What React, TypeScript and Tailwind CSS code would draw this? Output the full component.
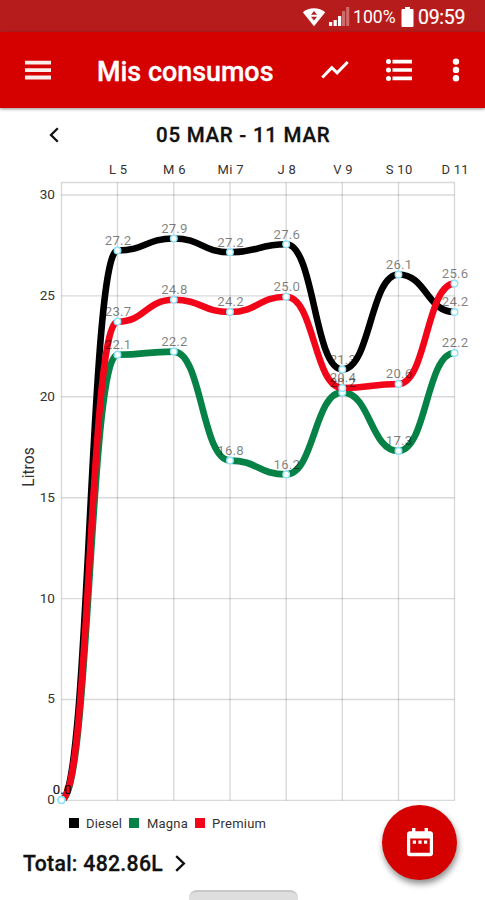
type Series = { name: string; color: string; points: number[]; labels: string[] };

const xs = [61.5, 117.5, 173.8, 230, 286.2, 342.3, 398.5, 454.5];

const series: Series[] = [
  {
    name: 'Diesel',
    color: '#000000',
    points: [800, 250.5, 238.5, 252.3, 244.3, 369.5, 274.5, 312],
    labels: ['0.0', '27.2', '27.9', '27.2', '27.6', '21.3', '26.1', '24.2'],
  },
  {
    name: 'Magna',
    color: '#078247',
    points: [800, 354.7, 351.6, 460.6, 474.4, 392.4, 451, 353],
    labels: ['0.0', '22.1', '22.2', '16.8', '16.2', '20.2', '17.3', '22.2'],
  },
  {
    name: 'Premium',
    color: '#f20519',
    points: [800, 321.6, 299.8, 312, 296.7, 388, 384, 283.6],
    labels: ['0.0', '23.7', '24.8', '24.2', '25.0', '20.4', '20.6', '25.6'],
  },
];

const days = ['L 5', 'M 6', 'Mi 7', 'J 8', 'V 9', 'S 10', 'D 11'];
const ticks = [30, 25, 20, 15, 10, 5, 0];

function curve(points: number[]) {
  return points
    .map((y, i) => {
      if (i === 0) return `M${xs[0]} ${y}`;
      const mid = (xs[i - 1] + xs[i]) / 2;
      return `C${mid} ${points[i - 1]} ${mid} ${y} ${xs[i]} ${y}`;
    })
    .join(' ');
}

function StatusBar() {
  return (
    <div className="flex h-8 shrink-0 items-center justify-end bg-[#b71c1c] pr-[19px] pt-[2px] text-white">
      <svg width="24" height="20" viewBox="0 0 24 20" className="mr-[3px]">
        <path d="M.8 5.2C6.8-.2 17.2-.2 23.2 5.2L12 19.2z" fill="#fff" />
        <path d="M12 4l3 3.8H9zM12 13.6l3-3.8H9z" fill="#b71c1c" />
      </svg>
      <svg width="21" height="20" viewBox="0 0 21 20" className="mr-[3px]">
        <path d="M0 15h3.2v4H0zM4.6 13h3.2v6H4.6zM9 9h3.2v10H9z" fill="#fff" />
        <path d="M13 4h3.2v15H13zM17.2 0h3v19h-3z" fill="#fff" opacity=".35" />
      </svg>
      <span className="w-[44px] whitespace-nowrap pt-px text-[17.6px] leading-none">100%</span>
      <svg width="13" height="20" viewBox="0 0 13 20" className="ml-[4px] mr-[4px]">
        <path d="M4 0h5v2h2.5q1 0 1 1v16q0 1-1 1h-10q-1 0-1-1V3q0-1 1-1H4z" fill="#fff" />
      </svg>
      <span className="w-[48px] whitespace-nowrap pt-px text-[19.5px] leading-none tracking-[-0.3px] [-webkit-text-stroke:0.2px_white]">
        09:59
      </span>
    </div>
  );
}

function AppBar() {
  return (
    <header className="z-10 flex h-[76px] shrink-0 items-center bg-[#d50000] pb-[1px] text-white shadow-[0_1px_3px_rgba(0,0,0,0.45)]">
      <svg width="26" height="20" viewBox="0 0 26 20" className="ml-[25px] shrink-0" fill="#fff" fillOpacity=".93">
        <path d="M0 .8h26.4v3.8H0zM0 8.2h26.4V12H0zM0 15.6h26.4v3.8H0z" />
      </svg>
      <h1 className="ml-[46px] mt-[5px] w-[180px] whitespace-nowrap text-[26.9px] font-medium leading-none [-webkit-text-stroke:0.35px_white]">
        Mis consumos
      </h1>
      <svg width="28" height="18" viewBox="0 0 28 18" className="ml-[44px] shrink-0">
        <path d="M1.3 16.5l9.5-9.8 5.3 5.1L26.7 1" fill="none" stroke="#fff" strokeWidth="3" />
      </svg>
      <svg width="27" height="22" viewBox="0 0 27 22" className="ml-[37px] shrink-0" fill="#fff">
        <circle cx="2.5" cy="2.6" r="2.5" />
        <circle cx="2.5" cy="11" r="2.5" />
        <circle cx="2.5" cy="19.4" r="2.5" />
        <path d="M6.5 .8H26V4.4H6.5zM6.5 9.2H26V12.8H6.5zM6.5 17.6H26V21.2H6.5z" />
      </svg>
      <svg width="8" height="24" viewBox="0 0 8 24" className="ml-[39px] shrink-0" fill="#fff">
        <circle cx="4" cy="3.6" r="3.2" />
        <circle cx="4" cy="11.9" r="3.2" />
        <circle cx="4" cy="20.2" r="3.2" />
      </svg>
    </header>
  );
}

function Chart() {
  return (
    <svg width="485" height="655" viewBox="0 155 485 655" className="block shrink-0">
      <defs>
        <clipPath id="plot">
          <rect x="61" y="182" width="394" height="619" />
        </clipPath>
      </defs>
      <g stroke="#000" strokeOpacity=".15" strokeWidth="1.4">
        {ticks.map((t) => (
          <line key={t} x1="61.5" x2="454.5" y1={195 + (30 - t) * 20.18} y2={195 + (30 - t) * 20.18} />
        ))}
        {xs.map((x) => (
          <line key={x} x1={x} x2={x} y1="182.5" y2="800.5" />
        ))}
        <line x1="61.5" x2="454.5" y1="182.5" y2="182.5" />
      </g>
      <g fontSize="13.6" fill="#333">
        {ticks.map((t) => (
          <text key={t} x="55" y={199.2 + (30 - t) * 20.17} textAnchor="end">
            {t}
          </text>
        ))}
        {days.map((d, i) => (
          <text key={d} x={xs[i + 1] + 0.7} y="174" textAnchor="middle" fontSize="13" letterSpacing=".3">
            {d}
          </text>
        ))}
      </g>
      <text transform="translate(34 467) rotate(-90)" textAnchor="middle" fontSize="15.6" fill="#333">
        Litros
      </text>
      <g clipPath="url(#plot)">
        {series.map((s) => (
          <path key={s.name} d={curve(s.points)} fill="none" stroke={s.color} strokeWidth="6.6" />
        ))}
      </g>
      <g fontSize="13.2" fill="#000" fillOpacity=".5" textAnchor="middle" letterSpacing=".2">
        {series.map((s) =>
          s.points.map((y, i) => (
            <text key={`${s.name}-${i}`} x={xs[i] + 0.6} y={y - 5.7}>
              {s.labels[i]}
            </text>
          )),
        )}
      </g>
      <g fill="#fff" stroke="#8ce3fa" strokeWidth="1.4">
        {series.map((s) =>
          s.points.map((y, i) => <circle key={`${s.name}-${i}`} cx={xs[i]} cy={y} r="3.3" />),
        )}
      </g>
    </svg>
  );
}

function Legend() {
  return (
    <div className="flex h-[26px] shrink-0 items-center pl-[69px] text-[13px] leading-none text-[#333]">
      <i className="h-[10px] w-[10px] bg-black" />
      <span className="ml-[7px] w-[43px] tracking-[0.1px]">Diesel</span>
      <i className="h-[10px] w-[10px] bg-[#078247]" />
      <span className="ml-[8px] w-[48px] tracking-[0.2px]">Magna</span>
      <i className="h-[10px] w-[10px] bg-[#f20519]" />
      <span className="ml-[7px] tracking-[0.25px]">Premium</span>
    </div>
  );
}

export default function App() {
  return (
    <div className="relative flex h-[900px] w-[485px] flex-col overflow-hidden bg-white font-['Roboto',sans-serif]">
      <StatusBar />
      <AppBar />
      <div className="flex h-[47px] shrink-0 items-center pt-[6px]">
        <svg width="10" height="16" viewBox="0 0 10 16" className="ml-[49px]">
          <path d="M8.8 1.3L2 8l6.8 6.7" fill="none" stroke="#111" strokeWidth="2.3" />
        </svg>
        <h2 className="ml-[97px] whitespace-nowrap pt-[2px] text-[20.5px] font-medium leading-none tracking-[0.75px] text-[#111] [-webkit-text-stroke:0.3px_#111]">
          05 MAR - 11 MAR
        </h2>
      </div>
      <Chart />
      <Legend />
      <div className="flex h-[54px] shrink-0 items-center pl-[23px] text-[#111]">
        <span className="w-[141px] whitespace-nowrap pt-[2px] text-[21.2px] font-medium leading-none tracking-[0.3px] [-webkit-text-stroke:0.3px_#111]">
          Total: 482.86L
        </span>
        <svg width="11" height="17" viewBox="0 0 11 17" className="ml-[11px]">
          <path d="M1.2 1.2L8.8 8.5l-7.6 7.3" fill="none" stroke="#111" strokeWidth="2.4" />
        </svg>
      </div>
      <div className="ml-[189px] h-[10px] w-[109px] shrink-0 rounded-t-[8px] border-t-2 border-[#c8c8c8] bg-[#dedede]" />
      <button className="absolute left-[382px] top-[805px] flex h-[75px] w-[75px] items-center justify-center rounded-full bg-[#d50000] shadow-[1px_4px_6px_rgba(0,0,0,0.45)]">
        <svg width="26" height="29" viewBox="0 0 26 29" fill="none">
          <path
            d="M3 3.2h20Q26 3.2 26 6.2v19q0 3-3 3H3Q0 28.2 0 25.2v-19q0-3 3-3zM3.2 10.5v14.3h19.6V10.5z"
            fill="#fff"
            fillRule="evenodd"
          />
          <path d="M5 0h3.400v5H5zM17.600 0H21v5h-3.400z" fill="#fff" />
          <path d="M5.800 12.500h3.200v3.200H5.800zM11.400 12.500h3.200v3.200h-3.200zM17 12.500h3.200v3.200H17z" fill="#fff" />
        </svg>
      </button>
    </div>
  );
}
